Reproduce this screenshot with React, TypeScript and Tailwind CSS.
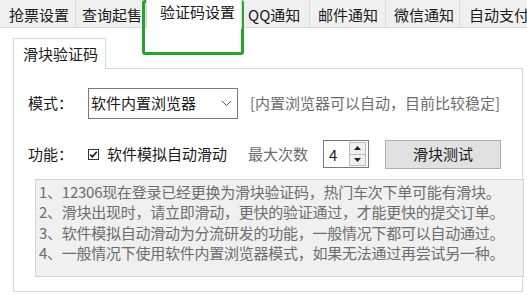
import { useState } from 'react';

const tabs = [
  { label: '抢票设置', w: 'w-[76px]', pl: 'pl-[9px]' },
  { label: '查询起售', w: 'w-[70px]', pl: 'pl-[6px]' },
  { label: '验证码设置', w: 'w-[96px]', pl: 'pl-[13px]', active: true },
  { label: 'QQ通知', w: 'w-[68px]', pl: 'pl-[6px]' },
  { label: '邮件通知', w: 'w-[76px]', pl: 'pl-[8px]' },
  { label: '微信通知', w: 'w-[74px]', pl: 'pl-[8px]' },
  { label: '自动支付', w: 'w-[80px]', pl: 'pl-[9px]' }
];

const notes = [
  '1、12306现在登录已经更换为滑块验证码，热门车次下单可能有滑块。',
  '2、滑块出现时，请立即滑动，更快的验证通过，才能更快的提交订单。',
  '3、软件模拟自动滑动为分流研发的功能，一般情况下都可以自动通过。',
  '4、一般情况下使用软件内置浏览器模式，如果无法通过再尝试另一种。'
];

export default function App() {
  const [auto, setAuto] = useState(true);
  const [count, setCount] = useState(4);

  return (
    <div
      className="relative h-[296px] w-[527px] overflow-hidden bg-white text-[15px] text-[#1a1a1a]"
      style={{ fontFamily: '"Noto Sans CJK SC", "Noto Sans", sans-serif' }}
    >
      {/* top tab strip */}
      <div className="flex h-[28px] border-b border-[#d9d9d9] bg-[#f0f0f0]">
        {tabs.map((t) =>
          t.active ? (
            <div
              key={t.label}
              className={`${t.w} ${t.pl} relative z-10 -mb-px flex h-[29px] shrink-0 items-start border-x border-[#d9d9d9] bg-white pt-[1px] leading-[22px]`}
            >
              {t.label}
            </div>
          ) : (
            <div
              key={t.label}
              className={`${t.w} ${t.pl} flex h-[28px] shrink-0 items-center border-r border-[#dcdcdc] leading-none`}
            >
              <span className="whitespace-nowrap">{t.label}</span>
            </div>
          )
        )}
      </div>

      <div className="px-[13px] pt-[10px]">
        {/* inner tab */}
        <div className="flex">
          <div className="relative z-10 -mb-px flex h-[31px] w-[93px] items-center border-x border-t border-[#d9d9d9] bg-white pl-[9px]">
            滑块验证码
          </div>
        </div>

        <div className="h-[224px] w-[510px] border border-[#d9d9d9] pl-[14px] pt-[19px]">
          {/* mode row */}
          <div className="flex h-[31px] items-center">
            <span className="w-[60px]">模式：</span>
            <div className="flex h-[31px] w-[150px] items-center justify-between border border-[#7a7a7a] pl-[2px] pr-[5px]">
              <span>软件内置浏览器</span>
              <svg width="11" height="7" viewBox="0 0 11 7" fill="none">
                <path d="M1 1l4.5 4.5L10 1" stroke="#555" strokeWidth="1" />
              </svg>
            </div>
            <span className="ml-[12px] whitespace-nowrap text-[#6d6d6d]">[内置浏览器可以自动，目前比较稳定]</span>
          </div>

          {/* function row */}
          <div className="mt-[20px] flex h-[30px] items-center">
            <span className="w-[60px]">功能：</span>
            <button
              type="button"
              onClick={() => setAuto((v) => !v)}
              className="flex h-[11px] w-[11px] items-center justify-center border border-[#333] bg-white"
            >
              {auto ? (
                <svg width="9" height="9" viewBox="0 0 9 9" fill="none">
                  <path d="M1.2 4.6l2.2 2.2L7.8 1.8" stroke="#111" strokeWidth="1.6" />
                </svg>
              ) : null}
            </button>
            <span className="ml-[8px] whitespace-nowrap">软件模拟自动滑动</span>
            <span className="ml-[21px] whitespace-nowrap text-[#6d6d6d]">最大次数</span>
            <div className="ml-[15px] flex h-[28px] w-[46px] items-center border border-[#7a7a7a]">
              <span className="w-[25px] pl-[5px] leading-none">{count}</span>
              <div className="flex h-[24px] w-[17px] flex-col border border-[#bcbcbc] bg-[#f0f0f0]">
                <button
                  type="button"
                  onClick={() => setCount((c) => c + 1)}
                  className="flex flex-1 items-center justify-center border-b border-[#bcbcbc]"
                >
                  <svg width="7" height="4" viewBox="0 0 7 4">
                    <path d="M0 4L3.5 0L7 4z" fill="#222" />
                  </svg>
                </button>
                <button
                  type="button"
                  onClick={() => setCount((c) => Math.max(1, c - 1))}
                  className="flex flex-1 items-center justify-center"
                >
                  <svg width="7" height="4" viewBox="0 0 7 4">
                    <path d="M0 0L3.5 4L7 0z" fill="#222" />
                  </svg>
                </button>
              </div>
            </div>
            <button
              type="button"
              className="ml-[16px] h-[29px] w-[116px] border border-[#adadad] bg-[#e1e1e1]"
            >
              滑块测试
            </button>
          </div>

          {/* notes */}
          <div className="ml-[7px] mt-[10px] h-[98px] w-[489px] border border-[#d4d4d4] bg-[#f0f0f0] pl-[3px] pt-[2px] leading-[20.4px] text-[#6d6d6d] tracking-[-0.25px]">
            {notes.map((n) => (
              <div key={n} className="whitespace-nowrap">
                {n}
              </div>
            ))}
          </div>
        </div>
      </div>

      {/* highlight annotation */}
      <div className="pointer-events-none absolute left-[142px] top-0 h-[55px] w-[102px] rounded-[3px] border-[3px] border-[#22a52a]" />
    </div>
  );
}
